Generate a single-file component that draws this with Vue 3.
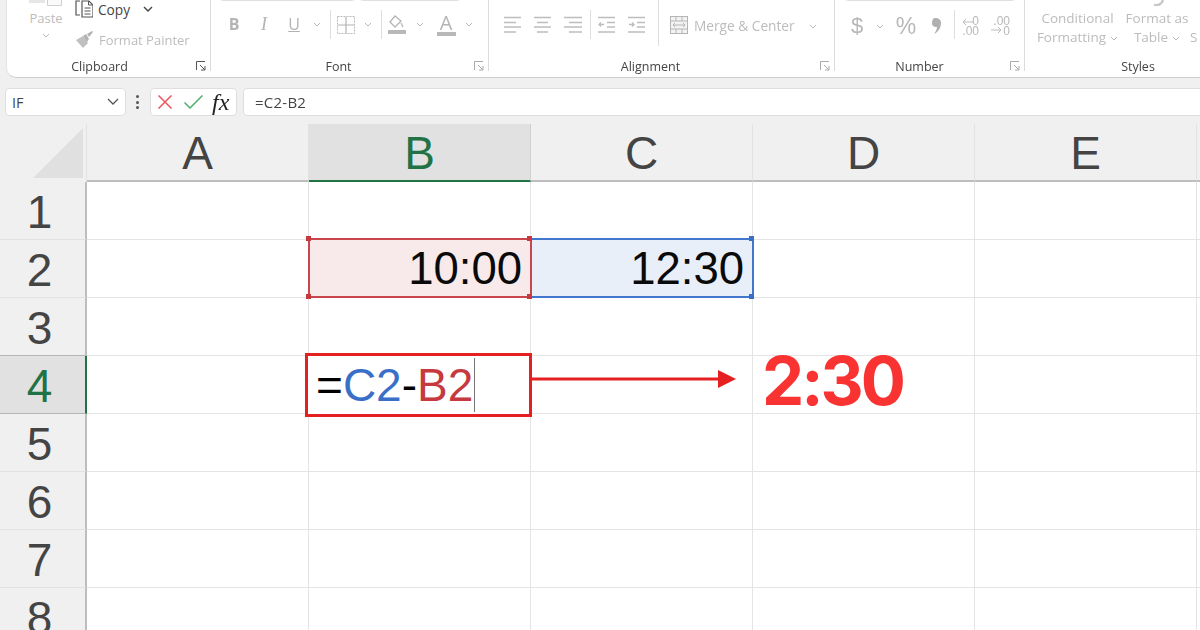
<script setup>
const cols = ['A', 'B', 'C', 'D', 'E', '']
const rows = [1, 2, 3, 4, 5, 6, 7, 8]
</script>

<template>
  <div class="app">
    <div class="ribbon">
      <section class="group clip">
        <div class="body clipbody">
          <div class="paste">
            <svg class="pasteicon" width="34" height="6" viewBox="0 0 34 6"><path d="M0 0v3h16V0z" fill="#e6e6e6"/><path d="M18.500 0v5.500h14V0" fill="#fafafa" stroke="#cfcfcf"/></svg>
            <span class="dim">Paste</span>
            <svg class="chev" width="8" height="5" viewBox="0 0 8 5"><path d="M1 1l3 3 3-3" fill="none" stroke="#b8b8b8" stroke-width="1"/></svg>
          </div>
          <div class="clipcol">
            <div class="cliprow copy">
              <svg width="18" height="18" viewBox="0 0 18 18"><path d="M5 1H1v14h4M7 1v16h11V5l-4-4z" fill="none" stroke="#555" stroke-width="1.2"/><path d="M9.500 8h6M9.500 11h6M9.500 14h6M13.500 1v4h4" fill="none" stroke="#555" stroke-width="1"/></svg>
              <span class="dark">Copy</span>
              <svg class="copychev" width="10" height="6" viewBox="0 0 10 6"><path d="M1 1l4 4 4-4" fill="none" stroke="#444" stroke-width="1.400"/></svg>
            </div>
            <div class="cliprow">
              <svg width="19" height="18" viewBox="0 0 19 18"><path d="M1 9l7-4 5 7-5 5z" fill="#c0c0c0"/><path d="M8 5l3-2 3 5-2 3zM12 3l5-3 1 1-4 5z" fill="#b2b2b2"/></svg>
              <span class="dim">Format Painter</span>
            </div>
          </div>
        </div>
        <div class="label">Clipboard</div>
        <svg class="launch" width="10" height="10" viewBox="0 0 10 10"><path d="M.5 9V.5H9M4 4l5 5M9 5v4H5" fill="none" stroke="#555" stroke-width="1"/></svg>
      </section>

      <section class="group font">
        <div class="stubs"><i class="stub s1"></i><i class="stub s2"></i></div>
        <div class="body iconrow">
          <b class="slot w30 letter">B</b>
          <i class="slot w30 letter serif">I</i>
          <span class="slot w30 letter under">U</span>
          <span class="slot w16"><svg width="8" height="5" viewBox="0 0 8 5"><path d="M1 1l3 3 3-3" fill="none" stroke="#b8b8b8"/></svg></span>
          <span class="slot w10"><i class="sep"></i></span>
          <span class="slot w22"><svg width="18" height="18" viewBox="0 0 18 18"><path d="M.5.500h17v17H.500z" fill="none" stroke="#bbb" stroke-dasharray="2 1"/><path d="M9 1v16M1 9h16" stroke="#b4b4b4" stroke-width="1.200"/></svg></span>
          <span class="slot w22"><svg width="8" height="5" viewBox="0 0 8 5"><path d="M1 1l3 3 3-3" fill="none" stroke="#b8b8b8"/></svg></span>
          <span class="slot w4"><i class="sep"></i></span>
          <span class="slot w28"><svg width="20" height="20" viewBox="0 0 20 20"><path d="M8 1l-5 6 5 5 6-6zM14 8l2 4" fill="none" stroke="#b5b5b5" stroke-width="1.300"/><rect x="1" y="15" width="18" height="4" fill="#b8b8b8"/></svg></span>
          <span class="slot w18"><svg width="8" height="5" viewBox="0 0 8 5"><path d="M1 1l3 3 3-3" fill="none" stroke="#b8b8b8"/></svg></span>
          <span class="slot w34 colora"><span class="acap">A</span><i class="abar"></i></span>
          <span class="slot w12"><svg width="8" height="5" viewBox="0 0 8 5"><path d="M1 1l3 3 3-3" fill="none" stroke="#b8b8b8"/></svg></span>
        </div>
        <div class="label">Font</div>
        <svg class="launch lite" width="10" height="10" viewBox="0 0 10 10"><path d="M.5 9V.5H9M4 4l5 5M9 5v4H5" fill="none" stroke="#aaa" stroke-width="1"/></svg>
      </section>

      <section class="group align">
        <div class="body iconrow">
          <span class="slot w30"><svg width="18" height="17" viewBox="0 0 18 17"><path d="M0 1.500h17M0 6.500h12M0 11h17M0 16h12" stroke="#bdbdbd" stroke-width="1.300"/></svg></span>
          <span class="slot w30"><svg width="18" height="17" viewBox="0 0 18 17"><path d="M0 1.500h17M3 6.500h11M0 11h17M3 16h11" stroke="#bdbdbd" stroke-width="1.300"/></svg></span>
          <span class="slot w30"><svg width="18" height="17" viewBox="0 0 18 17"><path d="M0 1.500h18M5 6.500h13M0 11h18M5 16h13" stroke="#bdbdbd" stroke-width="1.300"/></svg></span>
          <span class="slot w4"><i class="sep"></i></span>
          <span class="slot w30"><svg width="18" height="17" viewBox="0 0 18 17"><path d="M0 1.500h17M9 6.500h8M9 11h8M0 16h17M6 8.500H1M3 6.500l-2 2 2 2" fill="none" stroke="#bdbdbd" stroke-width="1.300"/></svg></span>
          <span class="slot w30"><svg width="18" height="17" viewBox="0 0 18 17"><path d="M0 1.500h17M9 6.500h8M9 11h8M0 16h17M1 8.500h5M4 6.500l2 2-2 2" fill="none" stroke="#bdbdbd" stroke-width="1.300"/></svg></span>
          <span class="slot w12"><i class="sep tall"></i></span>
          <span class="slot w30"><svg width="18" height="18" viewBox="0 0 18 18"><rect x=".5" y=".5" width="17" height="17" fill="#f3f3f3" stroke="#b5b5b5"/><path d="M1 5h16M1 13h16M6 1v4M12 1v4M6 13v4M12 13v4M3 9h12M5 7L3 9l2 2M13 7l2 2-2 2" fill="none" stroke="#b5b5b5"/></svg></span>
          <span class="dim merge">Merge &amp; Center</span>
          <span class="slot w36 low"><svg width="8" height="5" viewBox="0 0 8 5"><path d="M1 1l3 3 3-3" fill="none" stroke="#b8b8b8"/></svg></span>
        </div>
        <div class="label">Alignment</div>
        <svg class="launch lite" width="10" height="10" viewBox="0 0 10 10"><path d="M.5 9V.5H9M4 4l5 5M9 5v4H5" fill="none" stroke="#aaa" stroke-width="1"/></svg>
      </section>

      <section class="group number">
        <div class="stubs"><i class="stub s3"></i></div>
        <div class="body iconrow">
          <span class="slot w24 sym dollar">$</span>
          <span class="slot w22 low"><svg width="8" height="5" viewBox="0 0 8 5"><path d="M1 1l3 3 3-3" fill="none" stroke="#b8b8b8"/></svg></span>
          <span class="slot w30 sym pct">%</span>
          <span class="slot w32 low"><svg width="10" height="16" viewBox="0 0 10 16"><path d="M3 0c4 0 6 2 6 5 0 5-3 9-7 11 2-3 3-5 3-7-3 0-5-1-5-4 0-3 1-5 3-5z" fill="#b0b0b0"/></svg></span>
          <span class="slot w2"><i class="sep"></i></span>
          <span class="slot w32 dec lft"><svg width="11" height="10" viewBox="0 0 11 10"><path d="M11 5H1M4 2L1 5l3 3" fill="none" stroke="#bbb"/></svg><span class="d1">0</span><span class="d2">.00</span></span>
          <span class="slot w29 dec rgt"><svg width="11" height="10" viewBox="0 0 11 10"><path d="M0 5h10M7 2l3 3-3 3" fill="none" stroke="#bbb"/></svg><span class="d1">.00</span><span class="d2">0</span></span>
        </div>
        <div class="label">Number</div>
        <svg class="launch lite" width="10" height="10" viewBox="0 0 10 10"><path d="M.5 9V.5H9M4 4l5 5M9 5v4H5" fill="none" stroke="#aaa" stroke-width="1"/></svg>
      </section>

      <section class="group styles">
        <div class="body stylerow">
          <div class="st w95 dim"><span>Conditional</span><span>Formatting<svg class="stchev" width="8" height="5" viewBox="0 0 8 5"><path d="M1 1l3 3 3-3" fill="none" stroke="#b8b8b8"/></svg></span></div>
          <div class="st w64 dim">
            <svg class="tableicon" width="22" height="6" viewBox="0 0 22 6"><path d="M5 5c4 1 8-1 9-5" fill="none" stroke="#c8c8c8" stroke-width="2.500"/></svg>
            <span>Format as</span><span>Table<svg class="stchev" width="8" height="5" viewBox="0 0 8 5"><path d="M1 1l3 3 3-3" fill="none" stroke="#b8b8b8"/></svg></span>
          </div>
          <div class="st dim cut"><span>&nbsp;</span><span>S</span></div>
        </div>
        <div class="label lower">Styles</div>
      </section>
    </div>

    <div class="fbar">
      <div class="namebox">
        <span>IF</span>
        <svg width="12" height="8" viewBox="0 0 12 8"><path d="M1 1l5 5 5-5" fill="none" stroke="#555" stroke-width="1.300"/></svg>
      </div>
      <div class="dots"><i></i><i></i><i></i></div>
      <div class="fbtns">
        <svg width="14" height="14" viewBox="0 0 14 14"><path d="M.5.500l13 13M13.500.500l-13 13" stroke="#e8555a" stroke-width="1.500"/></svg>
        <svg width="19" height="14" viewBox="0 0 19 14"><path d="M.5 7.500l5.500 5.500L18.500.500" fill="none" stroke="#4fae6b" stroke-width="1.500"/></svg>
        <span class="fx">fx</span>
      </div>
      <div class="finput">=C2-B2</div>
    </div>

    <div class="sheet">
      <div class="corner"><i></i></div>
      <div v-for="c in cols" :key="c" class="colhead" :class="{ on: c === 'B' }">{{ c }}</div>
      <template v-for="r in rows" :key="r">
        <div class="rowhead" :class="{ on: r === 4 }">{{ r }}</div>
        <div
          v-for="c in cols"
          :key="c + r"
          class="cell"
          :class="{ pink: c === 'B' && r === 2, blue: c === 'C' && r === 2 }"
        >
          <template v-if="c === 'B' && r === 2">10:00<i class="h tl"></i><i class="h tr"></i><i class="h bl"></i><i class="h br"></i></template>
          <template v-else-if="c === 'C' && r === 2">12:30<i class="h tr"></i><i class="h br"></i></template>
          <div v-else-if="c === 'B' && r === 4" class="editor">
            <span>=</span><span class="cblue">C2</span><span>-</span><span class="cred">B2</span><i class="caret"></i>
          </div>
        </div>
      </template>
      <svg class="arrow" width="206" height="18" viewBox="0 0 206 18"><path d="M0 9h188" stroke="#e62020" stroke-width="3"/><path d="M187 0l18 9-18 9z" fill="#e62020"/></svg>
      <div class="result">2:30</div>
    </div>
  </div>
</template>

<style>
html, body { margin: 0; padding: 0; overflow: hidden; }
</style>

<style scoped>
.app { width: 1200px; height: 630px; background: #f0f0f0; overflow: hidden; font-family: "Open Sans", "Noto Sans", sans-serif; }
.ribbon { margin-left: 6px; height: 77px; background: #fff; border-bottom: 1px solid #cfcfcf; border-left: 1px solid #e4e4e4; border-bottom-left-radius: 10px; display: flex; overflow: hidden; box-sizing: content-box; filter: blur(.3px); }
.group { position: relative; flex: none; height: 71px; border-right: 1px solid #dcdcdc; box-sizing: border-box; }
.clip { width: 204px; }
.font { width: 278px; }
.align { width: 346px; }
.number { width: 190px; }
.styles { width: 226px; border-right: none; }
.body { height: 58px; box-sizing: border-box; }
.label { font-size: 12.500px; line-height: 18px; color: #444; text-align: center; height: 13px; }
.clip .label { padding-right: 18px; }
.font .label { padding-right: 22px; }
.align .label { padding-right: 22px; }
.number .label { padding-right: 20px; }
.launch { position: absolute; right: 4px; bottom: 0; }
.dim { color: #bcbcbc; font-size: 13px; }
.dark { color: #444; font-size: 13.700px; }
.clipbody { display: flex; }
.paste { width: 68px; padding-left: 5px; box-sizing: content-box; margin-right: -5px; display: flex; flex-direction: column; align-items: center; font-size: 13px; flex: none; }
.pasteicon { margin-bottom: 3px; }
.paste span { line-height: 18px; }
.chev { margin-top: 6px; }
.clipcol { display: flex; flex-direction: column; }
.cliprow { display: flex; align-items: center; gap: 5px; height: 22px; }
.cliprow.copy { height: 18px; margin-bottom: 11px; }
.copychev { margin-left: 8px; }
.stubs { height: 0; position: relative; }
.stub { position: absolute; top: -4px; height: 5px; border: 1px solid #e0e0e0; border-radius: 4px; box-sizing: border-box; }
.s1 { left: 9px; width: 135px; }
.s2 { left: 149px; width: 100px; }
.s3 { left: 10px; width: 170px; }
.iconrow { display: flex; align-items: flex-start; padding-top: 10px; }
.font .iconrow { padding-left: 8px; }
.align .iconrow { padding-left: 9px; }
.number .iconrow { padding-left: 10px; }
.slot { flex: none; height: 29px; display: flex; align-items: center; justify-content: center; position: relative; }
.low { padding-top: 3px; box-sizing: border-box; }
.w2 { width: 2px; } .w4 { width: 4px; } .w10 { width: 10px; } .w12 { width: 12px; } .w16 { width: 16px; } .w18 { width: 18px; } .w22 { width: 22px; } .w24 { width: 24px; } .w28 { width: 28px; } .w29 { width: 29px; } .w30 { width: 30px; } .w32 { width: 32px; } .w34 { width: 34px; } .w36 { width: 36px; }
.letter { color: #b4b4b4; font-size: 16px; font-style: normal; line-height: 27px; }
.serif { font-family: "Liberation Serif", serif; font-style: italic; font-size: 18px; }
.under { text-decoration: underline; }
.sep { display: block; width: 1px; height: 29px; background: #dedede; flex: none; }
.sep.tall { position: absolute; top: -10px; height: 46px; }
.colora { flex-direction: column; color: #b4b4b4; }
.acap { font-size: 20px; line-height: 18px; }
.abar { display: block; width: 19px; height: 4px; background: #b8b8b8; }
.merge { flex: none; width: 101px; line-height: 31px; white-space: nowrap; font-size: 13.700px; }
.sym { color: #b8b8b8; font-family: "Liberation Sans", sans-serif; padding-top: 3px; box-sizing: border-box; }
.dollar { font-size: 22px; }
.pct { font-size: 23px; }
.dec { font-family: "Liberation Sans", sans-serif; font-size: 12px; color: #b8b8b8; line-height: 10px; }
.dec svg { position: absolute; }
.d1, .d2 { position: absolute; }
.lft svg { left: 7px; top: 7px; }
.lft .d1 { right: 8px; top: 6px; }
.lft .d2 { right: 8px; top: 16px; }
.rgt svg { left: 4px; top: 15px; }
.rgt .d1 { right: 6px; top: 6px; }
.rgt .d2 { right: 6px; top: 16px; }
.stylerow { display: flex; padding-left: 5px; padding-top: 9px; }
.st { flex: none; display: flex; flex-direction: column; align-items: center; line-height: 19px; font-size: 13.500px; white-space: nowrap; position: relative; }
.stchev { margin-left: 4px; vertical-align: 1px; }
.w95 { width: 95px; }
.w64 { width: 64px; }
.tableicon { position: absolute; top: -9px; right: 18px; }
.cut { margin-left: 1px; }
.fbar { display: flex; align-items: stretch; height: 28px; margin-top: 10px; padding-left: 5px; filter: blur(.25px); }
.namebox, .fbtns, .finput { background: #fff; border: 1px solid #dedede; box-sizing: border-box; border-radius: 4px; }
.namebox { width: 121px; display: flex; align-items: center; justify-content: space-between; padding: 0 6px 0 6px; font-size: 14.500px; color: #444; }
.dots { width: 22px; margin-right: 2px; display: flex; flex-direction: column; align-items: center; justify-content: center; gap: 2.500px; }
.dots i { width: 3px; height: 3px; background: #555; border-radius: 50%; }
.fbtns { width: 87px; display: flex; align-items: center; padding-left: 7px; gap: 12px; }
.fx { font-family: "Liberation Serif", serif; font-style: italic; font-size: 24px; line-height: 24px; color: #222; margin-left: -3px; }
.finput { flex: 1; margin-left: 6px; margin-right: -2px; padding-left: 11px; line-height: 26px; font-size: 15px; letter-spacing: .25px; color: #444; border-radius: 4px 0 0 4px; }
.sheet { position: relative; margin-top: 8px; display: grid; grid-template-columns: 87px repeat(6, 222px); grid-template-rows: 58px repeat(8, 58px); font-family: "Liberation Sans", Arial, sans-serif; }
.corner { background: #f0f0f0; border-right: 1px solid #e2e2e2; position: relative; box-sizing: border-box; }
.corner i { position: absolute; right: 3px; bottom: 4px; width: 50px; height: 50px; background: #e0e0e0; clip-path: polygon(100% 0, 100% 100%, 0 100%); }
.colhead { background: #f0f0f0; border-right: 1px solid #e2e2e2; border-bottom: 2px solid #bdbdbd; box-sizing: border-box; text-align: center; font-size: 46px; line-height: 59px; color: #444; }
.colhead.on { background: #e1e1e1; color: #217346; border-bottom-color: #217346; border-right-color: #d0d0d0; }
.rowhead { background: #f0f0f0; border-right: 2px solid #bdbdbd; border-bottom: 1px solid #e2e2e2; box-sizing: border-box; text-align: center; font-size: 46px; line-height: 60px; color: #444; padding-right: 6px; }
.rowhead.on { background: #e1e1e1; color: #217346; border-right-color: #217346; border-bottom-color: #b5b5b5; box-shadow: 0 -1px #b5b5b5; z-index: 1; }
.cell { background: #fff; border-right: 1px solid #e4e4e4; border-bottom: 1px solid #e4e4e4; box-sizing: border-box; position: relative; font-size: 45.500px; text-align: right; color: #0a0a0a; line-height: 60px; padding-right: 8px; }
.pink { background: #f8eaea; outline: 2px solid #c9474c; outline-offset: -1px; z-index: 2; margin: -1px 0 1px; }
.blue { background: #e8eff9; outline: 2px solid #4177cc; outline-offset: -1px; z-index: 1; margin: -1px 0 1px; }
.h { position: absolute; width: 5px; height: 5px; }
.pink .h { background: #c5393f; }
.blue .h { background: #3a6fc8; }
.tl { left: -3px; top: -3px; } .tr { right: -2px; top: -3px; } .bl { left: -3px; bottom: -3px; } .br { right: -2px; bottom: -3px; }
.editor { position: absolute; left: -4px; top: -3px; width: 227px; height: 64px; box-sizing: border-box; border: 3px solid #e62020; z-index: 2; display: flex; align-items: center; padding-left: 8px; font-size: 46px; color: #000; background: #fff; }
.cblue { color: #3a6fc8; }
.cred { color: #c5393f; }
.caret { display: block; width: 1px; height: 54px; background: #777; margin-left: 1px; }
.arrow { position: absolute; left: 531px; top: 246px; z-index: 3; }
.result { position: absolute; left: 762px; top: 215px; font-family: Inter, sans-serif; font-weight: 700; font-size: 67px; line-height: 84px; letter-spacing: -3px; color: #f93232; z-index: 3; }
</style>
